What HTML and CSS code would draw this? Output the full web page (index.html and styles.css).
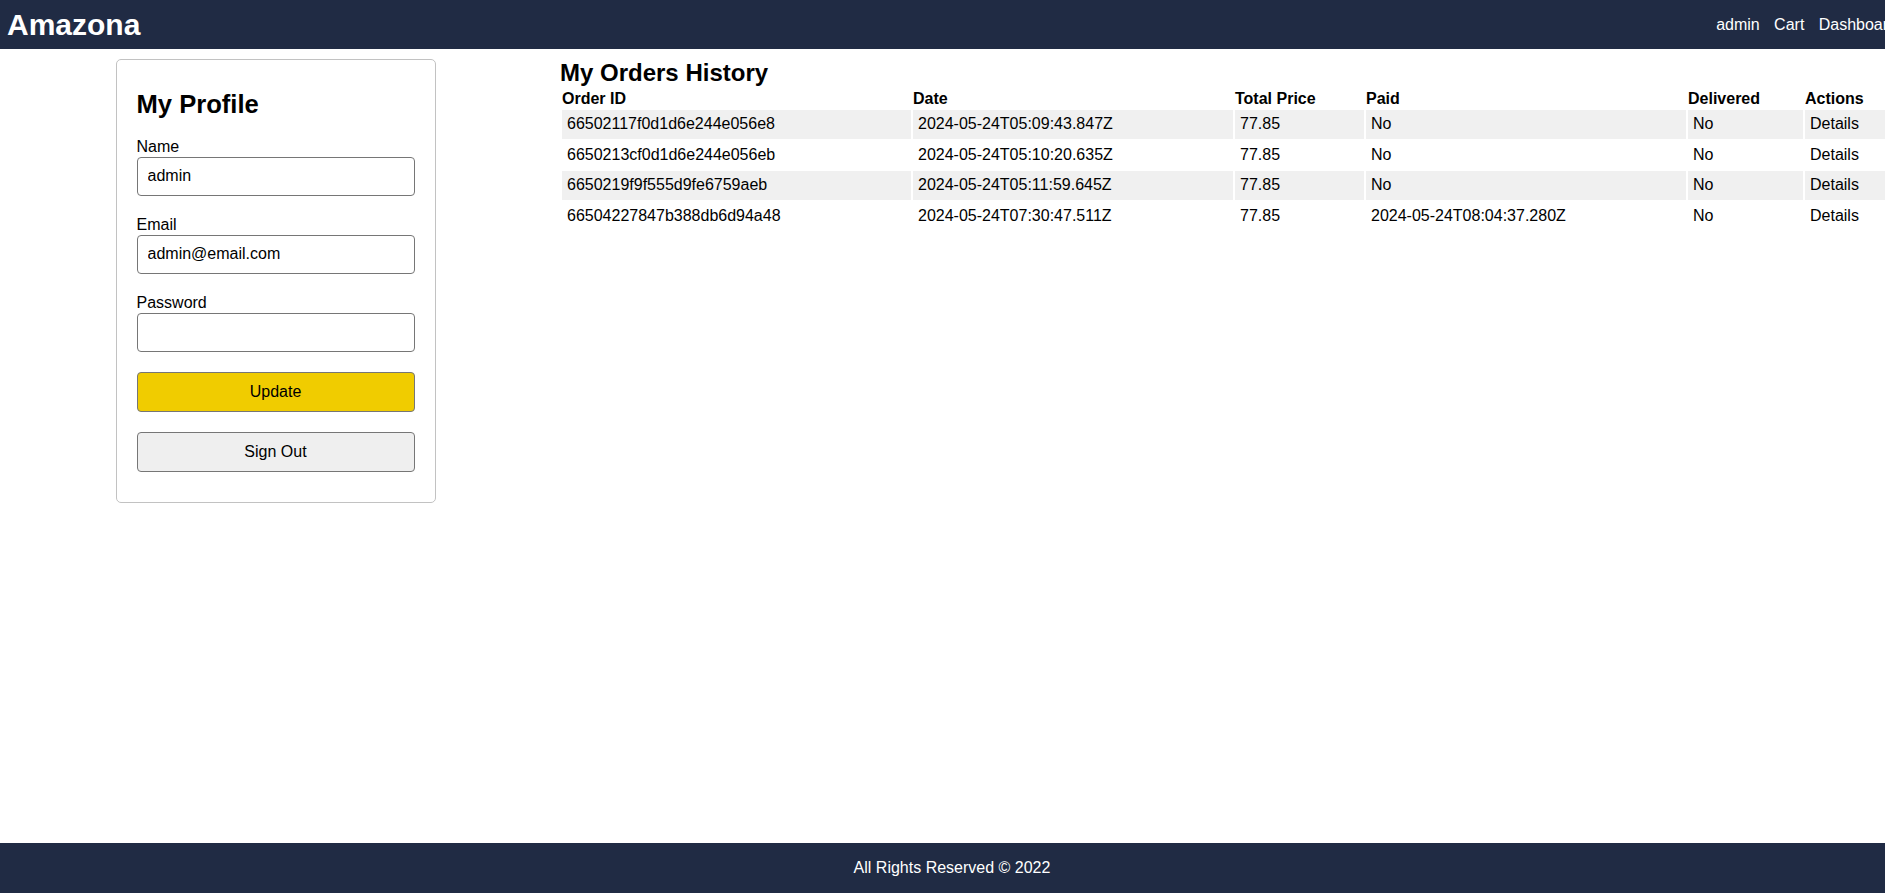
FILE: index.html
```html
<!DOCTYPE html>
<html lang="en">
<head>
<meta charset="utf-8">
<title>Amazona - Profile</title>
<link rel="stylesheet" href="styles.css">
</head>
<body>
<div class="page">
  <header class="topbar">
    <a class="brand" href="#">Amazona</a>
    <nav class="nav">
      <a href="#">admin</a>
      <a href="#">Cart</a>
      <a href="#">Dashboard</a>
    </nav>
  </header>
  <main class="main">
    <div class="left-col">
      <section class="card">
        <form class="form">
          <h1 class="card-title">My Profile</h1>
          <div class="field">
            <label for="name">Name</label>
            <input id="name" type="text" value="admin">
          </div>
          <div class="field">
            <label for="email">Email</label>
            <input id="email" type="email" value="admin@email.com">
          </div>
          <div class="field">
            <label for="password">Password</label>
            <input id="password" type="password" value="">
          </div>
          <button type="button" class="btn btn-primary">Update</button>
          <button type="button" class="btn">Sign Out</button>
        </form>
      </section>
    </div>
    <div class="right-col">
      <h2 class="section-title">My Orders History</h2>
      <table class="orders">
        <colgroup>
          <col class="c-id"><col class="c-date"><col class="c-total"><col class="c-paid"><col class="c-deliv"><col>
        </colgroup>
        <thead>
          <tr><th>Order ID</th><th>Date</th><th>Total Price</th><th>Paid</th><th>Delivered</th><th>Actions</th></tr>
        </thead>
        <tbody>
          <tr><td>66502117f0d1d6e244e056e8</td><td>2024-05-24T05:09:43.847Z</td><td>77.85</td><td>No</td><td>No</td><td>Details</td></tr>
          <tr><td>6650213cf0d1d6e244e056eb</td><td>2024-05-24T05:10:20.635Z</td><td>77.85</td><td>No</td><td>No</td><td>Details</td></tr>
          <tr><td>6650219f9f555d9fe6759aeb</td><td>2024-05-24T05:11:59.645Z</td><td>77.85</td><td>No</td><td>No</td><td>Details</td></tr>
          <tr><td>66504227847b388db6d94a48</td><td>2024-05-24T07:30:47.511Z</td><td>77.85</td><td>2024-05-24T08:04:37.280Z</td><td>No</td><td>Details</td></tr>
        </tbody>
      </table>
    </div>
  </main>
  <footer class="footer">All Rights Reserved © 2022</footer>
</div>
</body>
</html>
```

FILE: styles.css
```css
html, body {
  margin: 0;
  padding: 0;
}
body {
  overflow-x: hidden;
  font-family: "Liberation Sans", Arial, sans-serif;
  font-size: 16px;
  color: #000;
  background: #fff;
}
.page {
  width: 1904px;
  min-height: 100vh;
  display: grid;
  grid-template-rows: 49px 1fr 50px;
}
.topbar {
  background: #202b44;
  display: flex;
  align-items: center;
  padding: 0 7px;
}
.brand {
  color: #fff;
  text-decoration: none;
  font-weight: bold;
  font-size: 30px;
}
.nav {
  margin-left: auto;
  display: flex;
  gap: 14.4px;
}
.nav a {
  color: #fff;
  text-decoration: none;
}
.main {
  display: grid;
  grid-template-columns: 551px 1fr;
  column-gap: 9px;
  align-items: start;
  padding-top: 10px;
}
.left-col {
  display: flex;
  justify-content: center;
}
.card {
  width: 320px;
  box-sizing: border-box;
  border: 1px solid #c2c2c2;
  border-radius: 5px;
  padding: 30px 20px 30px;
}
.form {
  display: flex;
  flex-direction: column;
  gap: 20.2px;
}
.card-title {
  margin: 0 0 -1px;
  font-size: 25.6px;
  font-weight: bold;
}
.field {
  display: flex;
  flex-direction: column;
}
.field label {
  line-height: 18.4px;
}
.field input {
  box-sizing: border-box;
  height: 39.5px;
  padding: 0 10px;
  font-family: "Liberation Sans", Arial, sans-serif;
  font-size: 16px;
  border: 1px solid #767676;
  border-radius: 4px;
  color: #000;
  background: #fff;
}
.btn {
  box-sizing: border-box;
  height: 39.5px;
  font-family: "Liberation Sans", Arial, sans-serif;
  font-size: 16px;
  color: #000;
  background: #efefef;
  border: 1px solid #767676;
  border-radius: 4px;
  padding: 0;
}
.btn-primary {
  background: #f0cc00;
}
.right-col {
  min-width: 0;
}
.section-title {
  margin: 0;
  font-size: 24px;
  font-weight: bold;
}
.orders {
  width: 100%;
  table-layout: fixed;
  border-spacing: 2px;
}
.c-id { width: 349px; }
.c-date { width: 320px; }
.c-total { width: 129px; }
.c-paid { width: 320px; }
.c-deliv { width: 115px; }
.orders th {
  text-align: left;
  font-weight: bold;
  padding: 1px 0 0;
  line-height: 18.4px;
}
.orders td {
  padding: 5px;
  line-height: 18.4px;
  white-space: nowrap;
}
.orders tbody tr:nth-child(odd) td {
  background: #f0f0f0;
}
.footer {
  background: #202b44;
  color: #fff;
  display: flex;
  align-items: center;
  justify-content: center;
}
```
